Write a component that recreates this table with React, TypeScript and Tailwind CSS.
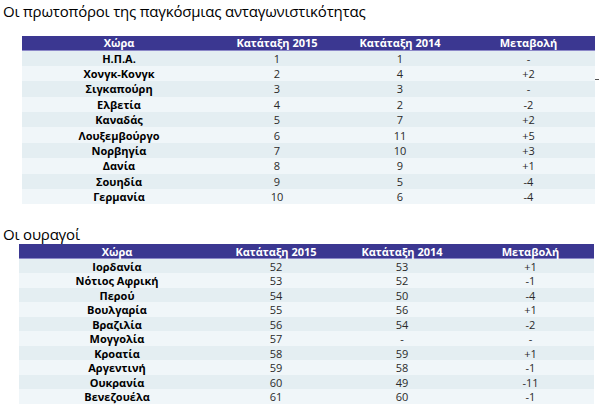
const leaders: [string, string, string, string][] = [
  ['Η.Π.Α.', '1', '1', '-'],
  ['Χονγκ-Κονγκ', '2', '4', '+2'],
  ['Σιγκαπούρη', '3', '3', '-'],
  ['Ελβετία', '4', '2', '-2'],
  ['Καναδάς', '5', '7', '+2'],
  ['Λουξεμβούργο', '6', '11', '+5'],
  ['Νορβηγία', '7', '10', '+3'],
  ['Δανία', '8', '9', '+1'],
  ['Σουηδία', '9', '5', '-4'],
  ['Γερμανία', '10', '6', '-4'],
];

const laggards: [string, string, string, string][] = [
  ['Ιορδανία', '52', '53', '+1'],
  ['Νότιος Αφρική', '53', '52', '-1'],
  ['Περού', '54', '50', '-4'],
  ['Βουλγαρία', '55', '56', '+1'],
  ['Βραζιλία', '56', '54', '-2'],
  ['Μογγολία', '57', '-', '-'],
  ['Κροατία', '58', '59', '+1'],
  ['Αργεντινή', '59', '58', '-1'],
  ['Ουκρανία', '60', '49', '-11'],
  ['Βενεζουέλα', '61', '60', '-1'],
];

const headers = ['Χώρα', 'Κατάταξη 2015', 'Κατάταξη 2014', 'Μεταβολή'];

function RankTable({ rows, cols, rowH, headH, stray }: {
  rows: [string, string, string, string][];
  cols: string;
  rowH: string;
  headH: string;
  stray?: boolean;
}) {
  return (
    <div className="text-[11px] leading-none">
      <div className={`grid ${cols} ${headH} items-center bg-[#3b3791] text-white font-bold border-b border-[#8c88c8]`}>
        {headers.map((h) => (
          <div key={h} className="text-center">{h}</div>
        ))}
      </div>
      {rows.map((r, i) => (
        <div
          key={r[0]}
          className={`relative grid ${cols} ${rowH} items-center ${i % 2 === 0 ? 'bg-[#e4eef2]' : 'bg-[#f0f6f9]'}`}
        >
          <div className="text-center font-bold text-black">{r[0]}</div>
          <div className="text-center text-[#2a2a2a]">{r[1]}</div>
          <div className="text-center text-[#2a2a2a]">{r[2]}</div>
          <div className="text-center text-[#2a2a2a]">{r[3]}</div>
          {/* stray mark right of the table, as in the source image */}
          {stray && i === 1 && (
            <div className="absolute right-[-4px] top-[13px] w-[4px] h-px bg-[#555]" />
          )}
        </div>
      ))}
    </div>
  );
}

export default function App() {
  return (
    <div className="w-[600px] h-[409px] bg-white overflow-hidden font-['Open_Sans','Noto_Sans',sans-serif]">
      <h1 className="pl-[3px] pt-[2px] text-[15px] leading-[19px] tracking-[-0.2px] text-black">
        Οι πρωτοπόροι της παγκόσμιας ανταγωνιστικότητας
      </h1>
      <div className="ml-[22px] mt-[15px] w-[573px]">
        <RankTable
          rows={leaders}
          cols="grid-cols-[194px_122px_124px_133px]"
          headH="h-[14.5px]"
          rowH="h-[15.4px]"
          stray
        />
      </div>
      <h2 className="pl-[3px] mt-[21px] text-[15px] leading-[19px] tracking-[-0.2px] text-black">Οι ουραγοί</h2>
      <div className="ml-[19px] w-[575px]">
        <RankTable
          rows={laggards}
          cols="grid-cols-[196px_122px_130px_127px]"
          headH="h-[14.5px]"
          rowH="h-[14.5px]"
        />
      </div>
    </div>
  );
}
